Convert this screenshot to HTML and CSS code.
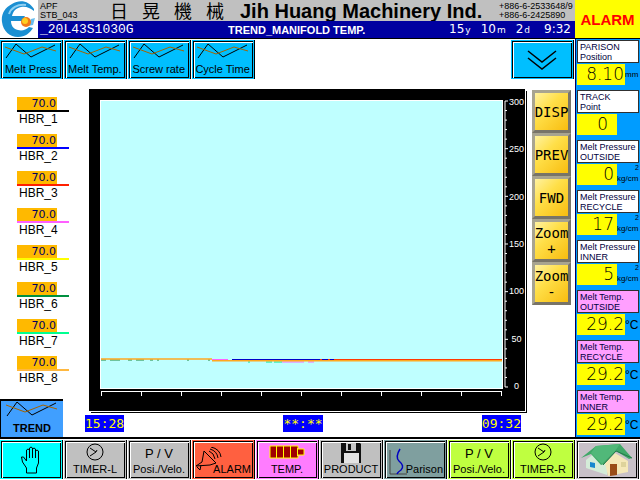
FILE: index.html
```html
<!DOCTYPE html>
<html lang="en">
<head>
<meta charset="utf-8">
<title>TREND_MANIFOLD TEMP.</title>
<link rel="stylesheet" href="styles.css">
</head>
<body>
<svg class="defs" aria-hidden="true">
  <symbol id="trend" viewBox="0 0 52 16"><path d="M1 15 11 1l15 13 24-12" fill="none" stroke="#000"/><path d="M0 4l19 7L37 4l14 4" fill="none" stroke="#a56300"/></symbol>
  <symbol id="clock" viewBox="0 0 18 18"><circle cx="9" cy="9" r="8" fill="none" stroke="#000"/><path d="M4 5l6 4-6 4M10 9l1-2" fill="none" stroke="#000"/></symbol>
</svg>
<div class="screen">
  <header class="header">
    <svg class="logo" viewBox="0 0 38 38" aria-label="Company logo">
      <rect width="38" height="38" fill="#fff"/>
      <path d="M34 9C29 1 20-1 12 4 4 8 1 15 2 22c1 9 8 15 16 15 7 0 12-4 15-9l-4-1c-3 3-7 4-11 3-5-1-7-5-7-9h11l3-5H12c1-5 4-8 9-9 5-1 9 1 13 4z" fill="#1b8fd2"/>
      <path d="M9 14C11 8 17 4 26 5" fill="none" stroke="#8fd0f2" stroke-width="2"/>
      <path d="M31 19l4-1-2 7-5 1z" fill="#67bdf0"/>
      <circle cx="26" cy="22" r="5" fill="#f27a18"/><circle cx="25" cy="21" r="3" fill="#ffcf20"/>
    </svg>
    <div class="brand">
      <div class="station">APF<br>STB_043</div>
      <div class="brand-cjk" lang="zh-Hant"><span>日</span><span>晃</span><span>機</span><span>械</span></div>
      <div class="company">Jih Huang Machinery Ind.</div>
      <div class="phones">+886-6-2533648/9<br>+886-6-2425890</div>
    </div>
    <div class="statusbar">
      <span class="recipe">_20L43S1030G</span>
      <h1 class="title">TREND_MANIFOLD TEMP.</h1>
      <time class="datetime"><span>15<small>y</small></span><span>10<small>m</small></span><span>2<small>d</small></span><span class="clock-time">9:32</span></time>
    </div>
  </header>
  <button class="alarm-flag" type="button">ALARM</button>

  <main class="main">
    <nav class="tabs">
      <button class="key sky" type="button"><svg class="trend"><use href="#trend"/></svg>Melt Press</button>
      <button class="key sky" type="button"><svg class="trend"><use href="#trend"/></svg>Melt Temp.</button>
      <button class="key sky" type="button"><svg class="trend"><use href="#trend"/></svg>Screw rate</button>
      <button class="key sky" type="button"><svg class="trend"><use href="#trend"/></svg>Cycle Time</button>
      <button class="key sky more" type="button" aria-label="More"><svg class="chevrons" viewBox="0 0 30 20"><path d="M1 1l14 11L29 1M1 8l14 11L29 8" fill="none" stroke="#000" stroke-width="1.5"/></svg></button>
    </nav>
    <div class="workspace">
      <section class="left">
        <ul class="legend">
          <li class="c1"><output>70.0</output><span>HBR_1</span></li>
          <li class="c2"><output>70.0</output><span>HBR_2</span></li>
          <li class="c3"><output>70.0</output><span>HBR_3</span></li>
          <li class="c4"><output>70.0</output><span>HBR_4</span></li>
          <li class="c5"><output>70.0</output><span>HBR_5</span></li>
          <li class="c6"><output>70.0</output><span>HBR_6</span></li>
          <li class="c7"><output>70.0</output><span>HBR_7</span></li>
          <li class="c8"><output>70.0</output><span>HBR_8</span></li>
        </ul>
        <button class="trend-tab" type="button"><svg class="trend"><use href="#trend"/></svg>TREND</button>
      </section>
      <section class="center">
        <figure class="chart">
          <svg class="plot" viewBox="0 0 403 289" preserveAspectRatio="none">
            <path d="M0 .5h403M.5 0v289M402.5 0v289M0 288.500h403" stroke="#fff" fill="none"/>
            <path d="M1 260h5m4 0h10m8 0h4m4 0h8m6 0h3m4 0h2m28 0h2m19 0h2" stroke="#20883c"/>
            <path d="M112 259.500h16" stroke="#ff63ff"/>
            <path d="M132 259.500h110" stroke="#0000c8"/>
            <path d="M220 259.500h2m6 0h2m4 0h168" stroke="#ff3800"/>
            <path d="M148 262h2m16 0h6m2 0h8" stroke="#00e890"/>
            <path d="M182 262h22m4 0h6" stroke="#ff63ff"/>
            <path d="M1 259h111M112 260.800h290" stroke="#ffa820" stroke-width="1.500"/>
          </svg>
          <div class="y-axis">
            <svg viewBox="0 0 3 300" preserveAspectRatio="none" shape-rendering="crispEdges"><path d="M0 0v300M0 0h3M0 10h2M0 20h2M0 30h2M0 40h2M0 50h3M0 60h2M0 70h2M0 80h2M0 90h2M0 100h3M0 110h2M0 120h2M0 130h2M0 140h2M0 150h3M0 160h2M0 170h2M0 180h2M0 190h2M0 200h3M0 210h2M0 220h2M0 230h2M0 240h2M0 250h3M0 260h2M0 270h2M0 280h2M0 290h2M0 300h3"/></svg>
            <div class="y-labels"><span>300</span><span>250</span><span>200</span><span>150</span><span>100</span><span>50</span><span>0</span></div>
          </div>
          <svg class="x-axis" viewBox="0 0 400 5" preserveAspectRatio="none" shape-rendering="crispEdges"><path d="M0 0h400M0 0v5M40 0v5M80 0v5M120 0v5M160 0v5M200 0v5M240 0v5M280 0v5M320 0v5M360 0v5M400 0v5"/></svg>
        </figure>
        <div class="times"><time>15:28</time><time>**:**</time><time>09:32</time></div>
      </section>
      <div class="controls">
        <button type="button">DISP</button>
        <button type="button">PREV</button>
        <button type="button">FWD</button>
        <button type="button">Zoom<br>+</button>
        <button type="button">Zoom<br>-</button>
      </div>
    </div>
  </main>

  <aside class="readings">
    <div class="reading wide"><h2>PARISON<br>Position</h2><p><output>8.10</output><span>mm</span></p></div>
    <div class="reading track"><h2>TRACK<br>Point</h2><p><output>0</output></p></div>
    <div class="reading flow"><h2>Melt Pressure<br>OUTSIDE</h2><p><output>0</output><sup>2</sup><span>kg/cm</span></p></div>
    <div class="reading flow"><h2>Melt Pressure<br>RECYCLE</h2><p><output>17</output><sup>2</sup><span>kg/cm</span></p></div>
    <div class="reading flow"><h2>Melt Pressure<br>INNER</h2><p><output>5</output><sup>2</sup><span>kg/cm</span></p></div>
    <div class="reading wide temp"><h2>Melt Temp.<br>OUTSIDE</h2><p><output>29.2</output><span>°C</span></p></div>
    <div class="reading wide temp"><h2>Melt Temp.<br>RECYCLE</h2><p><output>29.2</output><span>°C</span></p></div>
    <div class="reading wide temp"><h2>Melt Temp.<br>INNER</h2><p><output>29.2</output><span>°C</span></p></div>
  </aside>

  <nav class="bottom">
    <button class="key cyan" type="button" aria-label="Manual"><svg class="hand" viewBox="0 0 20 28"><path d="M5.500 27v-5l-4-6-1-5h2l3 4V4q1.500-2 3 0v8V2q1.500-2 3 0v10V3q1.500-2 3 0v9V5q1.500-2 3 0v12l-2 5v5z" fill="none" stroke="#000"/></svg></button>
    <button class="key gray" type="button"><svg class="clock"><use href="#clock"/></svg>TIMER-L</button>
    <button class="key gray" type="button"><span class="pv">P / V</span>Posi./Velo.</button>
    <button class="key red side-label" type="button"><svg class="bell" viewBox="0 0 28 26"><path d="M9 4l12 12M9 4L7 15l-6 4 14-1 6-2M6 18l-1 5-3-3M14 4q5 2 6 8M15 2q7 2 8 9M16 0q9 2 10 10" fill="none" stroke="#000"/></svg>ALARM</button>
    <button class="key pink" type="button"><svg class="battery" viewBox="0 0 36 14"><path d="M1 1h28v3h6v6h-6v3H1z" fill="#a00000" stroke="#ff0"/><path d="M7.500 1v12M14.500 1v12M21.500 1v12M28.500 3v8" stroke="#ff0"/></svg>TEMP.</button>
    <button class="key gray" type="button"><svg class="floppy" viewBox="0 0 20 20"><path d="M0 0h19l1 1v19H0z" fill="#111"/><path d="M5 0h10v8H5z" fill="#c8c8c8"/><path d="M7 1h3v6H7z" fill="#111"/><path d="M3 10h15v10H3z" fill="#e4e4e4"/></svg>PRODUCT</button>
    <button class="key teal side-label" type="button"><svg class="curve" viewBox="0 0 20 28"><path d="M2 2v24h17" fill="none" stroke="#444"/><path d="M12 1q-5 8-1 12 6 5 2 9-3 2-4 4" fill="none" stroke="#0000c0" stroke-width="1.500"/></svg>Parison</button>
    <button class="key lime" type="button"><span class="pv">P / V</span>Posi./Velo.</button>
    <button class="key lime" type="button"><svg class="clock"><use href="#clock"/></svg>TIMER-R</button>
    <button class="key silver" type="button" aria-label="Home"><svg class="house" viewBox="0 0 52 32"><path d="M5 16l10-8 11 9v14L5 24z" fill="#d4ecd8"/><path d="M24 19l10-10 13 8v11l-20 4z" fill="#f5e8b8"/><path d="M0 14L15 2l24-2 12 14-3 1-13-8-12 13-3 1L10 10z" fill="#40a868"/><path d="M15 2l24-2-5 7-13 13L10 9z" fill="#51b879"/><path d="M51 14L35 7 22 21" fill="none" stroke="#257849"/><path d="M29 20h7v11l-7 1z" fill="#9a4c18"/><path d="M9 18l5 1v5l-5-1z" fill="#1687cf"/><path d="M40 18h5v5h-5z" fill="#ded39b"/></svg></button>
  </nav>
</div>
</body>
</html>
```
FILE: styles.css
```css
* { box-sizing: border-box; }
body { margin: 0; background: #fff; color: #000; font-family: "Liberation Sans", Arial, sans-serif; font-size: 11px; }
button { font: inherit; color: inherit; margin: 0; padding: 0; border: 0; border-radius: 0; }
h1, h2, p, ul, figure { margin: 0; padding: 0; }
svg { display: block; }
.defs { position: absolute; width: 0; height: 0; }

.screen { display: grid; grid-template-columns: 1fr 65px; grid-template-rows: 39px 1fr auto; min-height: 100vh; }

.header { display: grid; grid-template-columns: 38px 1fr; grid-template-rows: 21px 17px; border-bottom: 1px solid #000; }
.logo { grid-row: 1 / 3; width: 38px; height: 38px; }
.brand { display: grid; grid-template-columns: 72px 130px 1fr 76px; align-items: center; background: #c0c0c0; white-space: nowrap; }
.station { padding-left: 2px; font-size: 9px; line-height: 9px; }
.brand-cjk { display: flex; gap: 14px; font-family: "Noto Sans CJK TC", sans-serif; font-size: 18px; line-height: 21px; }
.company { font-size: 20px; line-height: 20px; font-weight: bold; }
.phones { font-size: 9px; line-height: 9px; }
.statusbar { display: grid; grid-template-columns: 188px 1fr auto; align-items: center; padding: 0 4px 0 2px; background: #0000a0; color: #fff; white-space: nowrap; }
.recipe { font-family: "Liberation Mono", monospace; font-size: 13px; line-height: 16px; }
.title { font-size: 11px; line-height: 16px; }
.datetime { display: flex; gap: 10px; font-family: "DejaVu Sans", sans-serif; font-size: 12px; line-height: 16px; }
.datetime small { font-size: 9px; padding-left: 1px; }
.clock-time { padding-left: 4px; }

.alarm-flag { background: #ff0; color: #f00; font-size: 15px; font-weight: bold; border-bottom: 1px solid #000; }

.main { display: flex; flex-direction: column; }
.tabs { display: grid; grid-template-columns: repeat(9, 1fr); padding-top: 1px; }
.more { grid-column: 9; }

.key {
  --face: #c0c0c0;
  display: flex; flex-direction: column; align-items: center; justify-content: flex-end;
  height: 39px; margin-right: 1px; padding-bottom: 3px; line-height: 13px; white-space: nowrap;
  background: var(--face); border-right: 1px solid #000;
  box-shadow: inset 0 0 0 1px var(--face), inset 2px 2px 0 #000, inset 3px 3px 0 #fff, inset -2px -2px 0 #000;
}
.sky { --face: #00bfff; }
.cyan { --face: #00ffff; }
.red { --face: #ff6040; }
.pink { --face: #ff7cff; }
.teal { --face: #7f9f9f; }
.lime { --face: #bfff40; }
.silver { --face: #c8c0c8; }
.trend { width: 52px; height: 16px; margin-bottom: 4px; }
.more, .cyan, .silver { justify-content: center; padding-bottom: 0; }
.chevrons { width: 30px; height: 20px; }

.workspace { flex: 1; display: grid; grid-template-columns: 85px 1fr 49px; }
.left { display: flex; flex-direction: column; justify-content: space-between; padding-top: 18px; }
.legend { list-style: none; display: grid; gap: 8px; padding-left: 17px; }
.legend li { width: 52px; }
.legend output { display: block; width: 40px; height: 13px; padding-right: 1px; background: #ffb900; color: #000060; font-family: "DejaVu Sans", sans-serif; font-size: 11px; line-height: 13px; text-align: right; }
.legend span { display: block; padding-left: 2px; border-top: 2px solid var(--line); font-size: 12px; line-height: 14px; }
.c1 { --line: #000; }
.c2 { --line: #00f; }
.c3 { --line: #ff2000; }
.c4 { --line: #ff60ff; }
.c5 { --line: #ff0; }
.c6 { --line: #009040; }
.c7 { --line: #00ff90; }
.c8 { --line: #ffb840; }
.trend-tab { display: flex; flex-direction: column; align-items: center; width: 63px; height: 38px; border-top: 2px solid #000; border-left: 1px solid #000; background: #409fff; font-weight: bold; line-height: 14px; }

.center { display: flex; flex-direction: column; padding: 10px 1px 5px 0; }
.chart { flex: 1; display: grid; grid-template-columns: 1fr 22px; grid-template-rows: 1fr 22px; margin-left: 4px; padding: 11px 0 0 11px; background: #000; box-shadow: 1px 1px 0 #fff, 2px 2px 0 #000; }
.plot { width: 100%; height: 0; min-height: 100%; background: #bfffff; }
.y-axis { display: flex; padding: 1px 0 2px 2px; }
.y-axis svg { width: 3px; height: 0; min-height: 100%; overflow: visible; }
.y-axis path, .x-axis path { fill: none; stroke: #fff; vector-effect: non-scaling-stroke; }
.y-labels { display: flex; flex-direction: column; justify-content: space-between; align-items: center; width: 17px; margin: -4px 0; color: #fff; font-size: 9px; line-height: 10px; }
.x-axis { width: calc(100% - 3px); height: 5px; margin: 2px 0 0 1px; overflow: visible; }
.times { display: flex; justify-content: space-between; margin-right: 4px; padding-top: 4px; font-family: "DejaVu Sans Mono", monospace; font-size: 13px; line-height: 17px; color: #ff0; }
.times time { background: #00f; }

.controls { display: flex; flex-direction: column; padding: 11px 4px 0 6px; }
.controls button { height: 43px; border: 3px solid; border-color: #a8a490 #787468 #787468 #a8a490; background: linear-gradient(135deg, #fff2a0, #ffdf48 40%, #f8bd10); font-family: "DejaVu Sans Mono", monospace; font-size: 14px; line-height: 16px; display: grid; place-content: center; }

.readings { display: flex; flex-direction: column; gap: 5px; padding: 1px 1px 2px; border-left: 1px solid #000060; background: #009cff; }
.reading h2 { height: 23px; padding: 1px 0 0 2px; border: 1px solid #303030; background: #fff; color: #000040; font-size: 9px; font-weight: normal; line-height: 10px; white-space: nowrap; }
.reading.temp h2 { background: #ff9fff; }
.reading p { display: flex; align-items: center; height: 21px; margin-top: 1px; white-space: nowrap; color: #000; }
.reading output { flex: none; width: 40px; height: 21px; padding-right: 3px; background: #ff0; text-align: right; font-family: "DejaVu Sans", sans-serif; font-weight: 200; font-size: 17px; line-height: 21px; }
.reading.wide output { width: 48px; padding-right: 1px; }
.reading.track output { padding-right: 9px; }
.reading span { font-size: 8px; }
.reading.temp span { font-size: 12px; }
.reading.flow p { display: grid; grid-template-columns: 40px 1fr; grid-template-rows: 8px 13px; }
.reading.flow output { grid-row: 1 / 3; }
.reading.flow sup { justify-self: end; font-size: 7px; line-height: 8px; }
.reading.flow span { line-height: 10px; }

.bottom { grid-column: 1 / 3; display: grid; grid-template-columns: repeat(10, 1fr); padding: 1px 0; border-top: 2px solid #000; }
.clock { width: 18px; height: 18px; margin-bottom: 2px; }
.pv { font-size: 13px; line-height: 18px; }
.hand { width: 20px; height: 28px; }
.battery { width: 36px; height: 14px; margin-bottom: 4px; }
.floppy { width: 20px; height: 20px; }
.side-label { flex-direction: row; align-items: flex-end; justify-content: flex-end; padding-right: 3px; }
.bell { width: 28px; height: 26px; margin: 0 -10px 3px 0; }
.curve { width: 20px; height: 28px; margin-right: -2px; }
.house { width: 52px; height: 32px; }
```
